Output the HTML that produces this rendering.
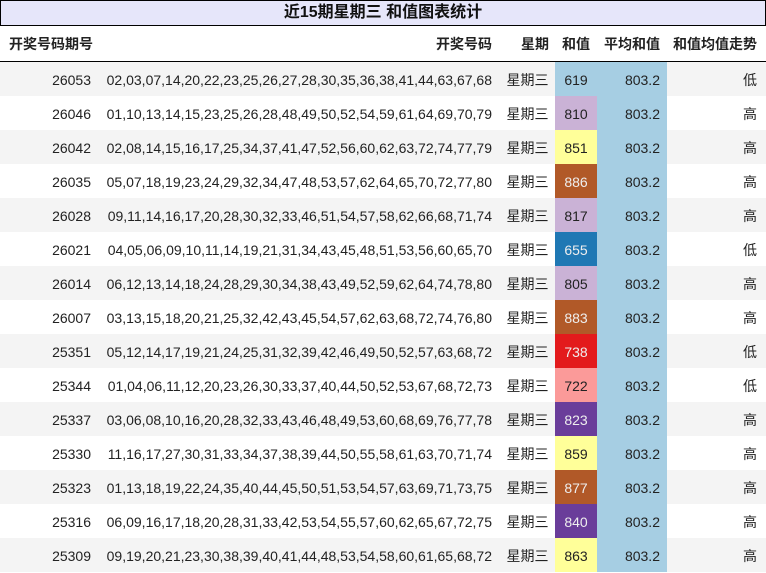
<!DOCTYPE html><html><head><meta charset="utf-8"><style>
body{margin:0;width:766px;height:573px;overflow:hidden;background:#fff;font-family:"Liberation Sans","Noto Sans CJK SC",sans-serif;font-size:14px;color:#222}
.t{position:absolute;left:0;top:0;width:764px;height:24px;border:1px solid #000;background:#e6e6fa;text-align:center;font-weight:bold;font-size:16px;line-height:24px;color:#111}
table{position:absolute;left:0;top:26px;border-collapse:collapse;table-layout:fixed;width:766px}
th,td{padding:0;white-space:nowrap}
th{height:35px;font-weight:bold;border-bottom:1px solid #000;font-size:14px}
td{height:32px;padding-top:2px}
tr.a td{background:#f4f4f4}
.c1{text-align:right;padding-right:8px}
.c2{text-align:right;padding-right:8px}
.c3{text-align:center}
.c4{text-align:center}
.c5{text-align:right;padding-right:7px;background:#a6cee3!important}
.c6{text-align:right;padding-right:9px}
th.c1{text-align:left;padding-left:9px;padding-right:0}
</style></head><body>
<div class="t">近15期星期三 和值图表统计</div>
<table>
<colgroup><col style="width:99px"><col style="width:401px"><col style="width:55px"><col style="width:42px"><col style="width:70px"><col style="width:99px"></colgroup>
<tr><th class="c1">开奖号码期号</th><th class="c2">开奖号码</th><th class="c3" style="text-align:right;padding-right:6px">星期</th><th class="c4">和值</th><th class="c5" style="background:#fff!important">平均和值</th><th class="c6">和值均值走势</th></tr>
<tr class="a"><td class="c1">26053</td><td class="c2">02,03,07,14,20,22,23,25,26,27,28,30,35,36,38,41,44,63,67,68</td><td class="c3">星期三</td><td class="c4" style="background:#a6cee3">619</td><td class="c5">803.2</td><td class="c6">低</td></tr>
<tr><td class="c1">26046</td><td class="c2">01,10,13,14,15,23,25,26,28,48,49,50,52,54,59,61,64,69,70,79</td><td class="c3">星期三</td><td class="c4" style="background:#cab2d6">810</td><td class="c5">803.2</td><td class="c6">高</td></tr>
<tr class="a"><td class="c1">26042</td><td class="c2">02,08,14,15,16,17,25,34,37,41,47,52,56,60,62,63,72,74,77,79</td><td class="c3">星期三</td><td class="c4" style="background:#ffff99">851</td><td class="c5">803.2</td><td class="c6">高</td></tr>
<tr><td class="c1">26035</td><td class="c2">05,07,18,19,23,24,29,32,34,47,48,53,57,62,64,65,70,72,77,80</td><td class="c3">星期三</td><td class="c4" style="background:#b15928;color:#eee">886</td><td class="c5">803.2</td><td class="c6">高</td></tr>
<tr class="a"><td class="c1">26028</td><td class="c2">09,11,14,16,17,20,28,30,32,33,46,51,54,57,58,62,66,68,71,74</td><td class="c3">星期三</td><td class="c4" style="background:#cab2d6">817</td><td class="c5">803.2</td><td class="c6">高</td></tr>
<tr><td class="c1">26021</td><td class="c2">04,05,06,09,10,11,14,19,21,31,34,43,45,48,51,53,56,60,65,70</td><td class="c3">星期三</td><td class="c4" style="background:#1f78b4;color:#eee">655</td><td class="c5">803.2</td><td class="c6">低</td></tr>
<tr class="a"><td class="c1">26014</td><td class="c2">06,12,13,14,18,24,28,29,30,34,38,43,49,52,59,62,64,74,78,80</td><td class="c3">星期三</td><td class="c4" style="background:#cab2d6">805</td><td class="c5">803.2</td><td class="c6">高</td></tr>
<tr><td class="c1">26007</td><td class="c2">03,13,15,18,20,21,25,32,42,43,45,54,57,62,63,68,72,74,76,80</td><td class="c3">星期三</td><td class="c4" style="background:#b15928;color:#eee">883</td><td class="c5">803.2</td><td class="c6">高</td></tr>
<tr class="a"><td class="c1">25351</td><td class="c2">05,12,14,17,19,21,24,25,31,32,39,42,46,49,50,52,57,63,68,72</td><td class="c3">星期三</td><td class="c4" style="background:#e31a1c;color:#eee">738</td><td class="c5">803.2</td><td class="c6">低</td></tr>
<tr><td class="c1">25344</td><td class="c2">01,04,06,11,12,20,23,26,30,33,37,40,44,50,52,53,67,68,72,73</td><td class="c3">星期三</td><td class="c4" style="background:#fb9a99">722</td><td class="c5">803.2</td><td class="c6">低</td></tr>
<tr class="a"><td class="c1">25337</td><td class="c2">03,06,08,10,16,20,28,32,33,43,46,48,49,53,60,68,69,76,77,78</td><td class="c3">星期三</td><td class="c4" style="background:#6a3d9a;color:#eee">823</td><td class="c5">803.2</td><td class="c6">高</td></tr>
<tr><td class="c1">25330</td><td class="c2">11,16,17,27,30,31,33,34,37,38,39,44,50,55,58,61,63,70,71,74</td><td class="c3">星期三</td><td class="c4" style="background:#ffff99">859</td><td class="c5">803.2</td><td class="c6">高</td></tr>
<tr class="a"><td class="c1">25323</td><td class="c2">01,13,18,19,22,24,35,40,44,45,50,51,53,54,57,63,69,71,73,75</td><td class="c3">星期三</td><td class="c4" style="background:#b15928;color:#eee">877</td><td class="c5">803.2</td><td class="c6">高</td></tr>
<tr><td class="c1">25316</td><td class="c2">06,09,16,17,18,20,28,31,33,42,53,54,55,57,60,62,65,67,72,75</td><td class="c3">星期三</td><td class="c4" style="background:#6a3d9a;color:#eee">840</td><td class="c5">803.2</td><td class="c6">高</td></tr>
<tr class="a"><td class="c1">25309</td><td class="c2">09,19,20,21,23,30,38,39,40,41,44,48,53,54,58,60,61,65,68,72</td><td class="c3">星期三</td><td class="c4" style="background:#ffff99">863</td><td class="c5">803.2</td><td class="c6">高</td></tr>
</table>
</body></html>
